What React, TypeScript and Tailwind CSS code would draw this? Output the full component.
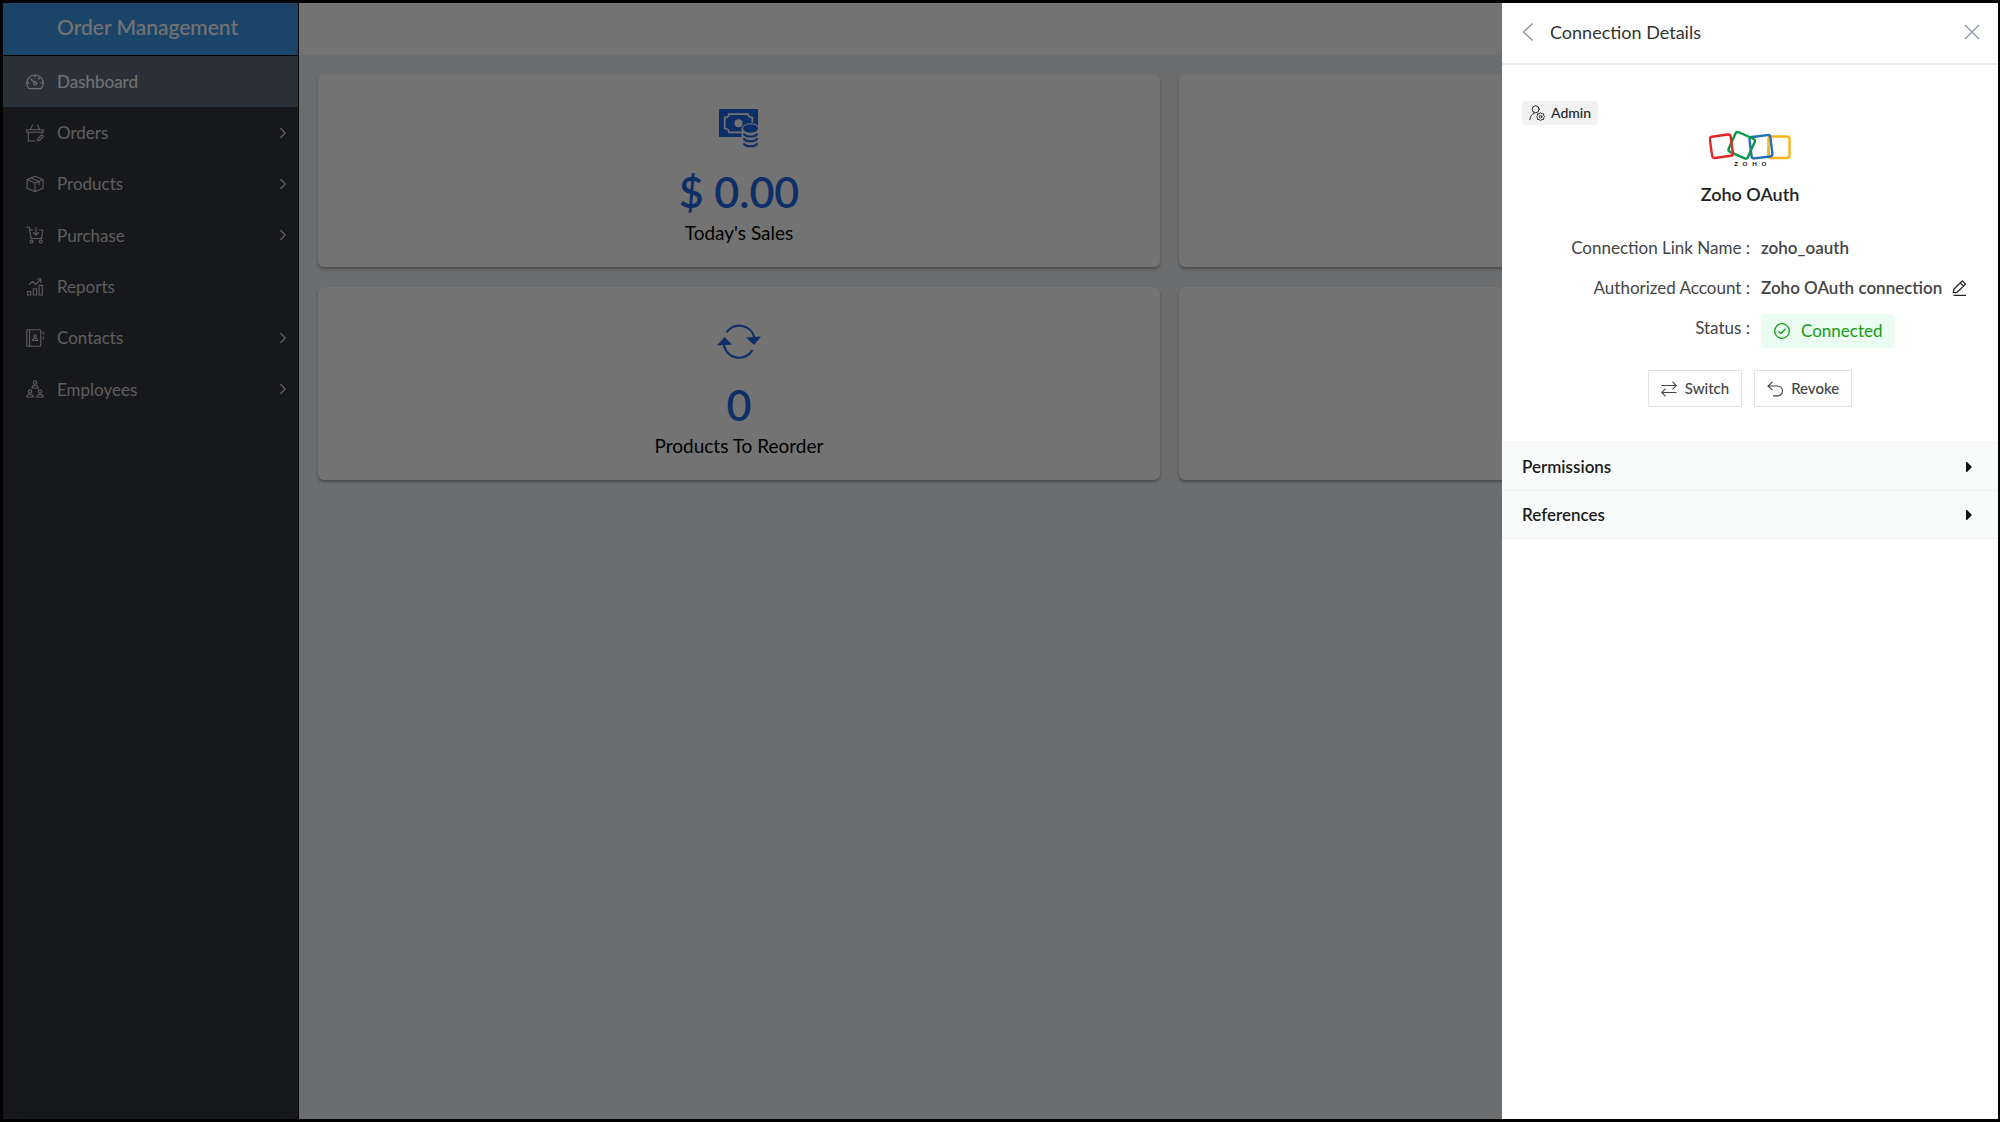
import { useState } from "react";
import type { ReactNode } from "react";

type IconProps = { className?: string };

function LineIcon({ className = "size-[18px]", children }: IconProps & { children: ReactNode }) {
  return (
    <svg
      viewBox="0 0 18 18"
      className={className}
      fill="none"
      stroke="currentColor"
      strokeWidth="1.1"
      strokeLinecap="round"
      strokeLinejoin="round"
      aria-hidden
    >
      {children}
    </svg>
  );
}

const DashboardIcon = () => (
  <LineIcon>
    <path d="M3 15.6h12c1.5-1.4 2.3-3.300 2.300-5.300A8.300 8.300 0 0 0 .7 10.300c0 2 .8 3.900 2.300 5.300z" />
    <circle cx="9.200" cy="10.400" r="1.500" />
    <path d="M8.200 9.300 4.800 6M9 2v2M13.600 5l-1 1M17 10h-2M1 10h2" />
  </LineIcon>
);

const OrdersIcon = () => (
  <LineIcon>
    <path d="M.7 5.800h16.600v2.400H.7zM4.500 5.600 6.500 1M13.500 5.600l-2-4.600M2.300 8.400V17h6.500M15.700 8.400v1.200" />
    <path d="m11.800 14.800 3.300-3.300a1.100 1.100 0 0 1 1.700 1.700l-3.300 3.300-2 .3z" />
  </LineIcon>
);

const ProductsIcon = () => (
  <LineIcon>
    <path d="M9 1.200 17 4.500v8.800l-8 3.500-8-3.500V4.500zM1 4.500 9 8l8-3.500M9 8v8.700M4.800 2.900l8.200 3.500v3.300" />
  </LineIcon>
);

const PurchaseIcon = () => (
  <LineIcon>
    <path d="M.8 1.200h2.400l1.900 11.300h10.600M3.800 4h3M13.600 4h3.200l-1.300 8.300M10 1.500v7.300M7.300 6.500 10 9l2.700-2.500" />
    <circle cx="5.600" cy="15.600" r="1.500" />
    <circle cx="14.800" cy="15.600" r="1.500" />
  </LineIcon>
);

const ReportsIcon = () => (
  <LineIcon>
    <path d="M1.500 13.500h3.300V17H1.500zM7.300 10.700h3.300V17H7.300zM13 7.400h3.300V17H13zM3.300 6.500l3.300-3 3.200 3L14.400 1.400M11.300 1h3.400v3.300" />
  </LineIcon>
);

const ContactsIcon = () => (
  <LineIcon>
    <path d="M2 .8h11.500a1.300 1.300 0 0 1 1.300 1.300v13.800a1.300 1.300 0 0 1-1.300 1.300H.8V.8zM3.600.8v16.400M17.300 3v2.200M17.300 8v2.200" />
    <circle cx="9.200" cy="7" r="1.300" />
    <path d="M6.500 11.500c.3-1.700 1.300-2.300 2.700-2.300s2.400.6 2.700 2.300z" />
  </LineIcon>
);

const EmployeesIcon = () => (
  <LineIcon>
    <circle cx="9" cy="2.500" r="1.700" />
    <path d="M5.800 8c.3-1.900 1.400-2.800 3.200-2.800s2.900.9 3.200 2.800z" />
    <circle cx="4" cy="11.600" r="1.700" />
    <path d="M.8 17c.3-1.900 1.400-2.800 3.200-2.800S6.900 15.100 7.200 17z" />
    <circle cx="14" cy="11.600" r="1.700" />
    <path d="M10.800 17c.3-1.900 1.400-2.800 3.200-2.800s2.900.9 3.200 2.800z" />
  </LineIcon>
);

const MoneyIcon = () => (
  <svg viewBox="0 0 40 40" className="size-10" fill="currentColor" aria-hidden>
    <path d="M0 1h39v16.500c-2-1.500-4.500-2.300-7.300-2.300-5 0-9.200 2.600-9.200 6.300V29H0z" />
    <path
      d="M22.500 24.300H10c0-2-1.700-3.800-4.300-3.800v-11C8.300 9.500 10 8 10 6.200h19c0 1.800 1.800 3.300 4.300 3.300v5"
      fill="none"
      stroke="#fff"
      strokeWidth="1.700"
    />
    <circle cx="19.500" cy="15.200" r="4" fill="#fff" />
    <ellipse cx="31.500" cy="20.500" rx="7.500" ry="4.200" />
    <g fill="none" stroke="currentColor" strokeWidth="2.200">
      <path d="M24.500 25.500c2 4 12 4 14 0M24.500 30.300c2 4 12 4 14 0M24.500 35.200c2 4 12 4 14 0" />
    </g>
  </svg>
);

const ReorderIcon = () => (
  <svg viewBox="0 0 44 36" className="h-9 w-11" fill="none" stroke="currentColor" strokeWidth="2.200" aria-hidden>
    <path d="M9.500 9.500A15.500 15.500 0 0 1 37.500 15M35.500 27A15.500 15.500 0 0 1 6.700 21" />
    <path d="M29 14.500 44 13.500 37 22zM0 22.500 7.500 14 15 21.500z" fill="currentColor" stroke="none" />
  </svg>
);

const ZohoLogo = () => (
  <svg viewBox="0 0 82 36" className="h-9 w-[82px]" fill="none" strokeWidth="2.400" role="img" aria-label="Zoho">
    <rect x="59.500" y="5.500" width="21" height="21.500" rx="2.500" stroke="#f9b21d" />
    <rect x="41.500" y="5" width="21" height="21.500" rx="2.500" stroke="#226db4" transform="rotate(-7 52 16)" />
    <rect x="22" y="3.500" width="21" height="21.500" rx="2.500" stroke="#089949" transform="rotate(24 32.500 14.800)" />
    <rect x="2" y="4.500" width="21" height="21.500" rx="2.500" stroke="#e42527" transform="rotate(-8 12.500 16)" />
    <path d="M59.500 15v9" stroke="#f9b21d" />
    <g
      fill="#111"
      stroke="none"
      fontFamily="Lato, sans-serif"
      fontSize="6"
      fontWeight="900"
      textAnchor="middle"
    >
      <text x="27" y="35">Z</text>
      <text x="36" y="35">O</text>
      <text x="45.500" y="35">H</text>
      <text x="55" y="35">O</text>
    </g>
  </svg>
);

const navItems = [
  { label: "Dashboard", icon: DashboardIcon, active: true },
  { label: "Orders", icon: OrdersIcon, sub: true },
  { label: "Products", icon: ProductsIcon, sub: true },
  { label: "Purchase", icon: PurchaseIcon, sub: true },
  { label: "Reports", icon: ReportsIcon },
  { label: "Contacts", icon: ContactsIcon, sub: true },
  { label: "Employees", icon: EmployeesIcon, sub: true },
];

function Sidebar() {
  return (
    <aside className="flex w-[296px] shrink-0 flex-col border-r border-black bg-[#34353c]">
      <div className="flex h-[53px] items-center border-b border-black bg-[#3d97e8] pb-1 pl-[54px] text-[21px] font-medium text-white">
        Order Management
      </div>
      <nav className="flex h-[359px] flex-col">
        {navItems.map(({ label, icon: Icon, active, sub }) => (
          <a
            key={label}
            href="#"
            className={`flex flex-1 items-center gap-[13px] pr-[10px] pl-[23px] text-[17px] ${
              active ? "bg-[#5e6c7c] text-white" : "text-[#d0d0d2]"
            }`}
          >
            <Icon />
            <span className="flex-1">{label}</span>
            {sub && (
              <LineIcon className="size-[10px]">
                <path d="m5 1 8 8-8 8" strokeWidth="2.600" />
              </LineIcon>
            )}
          </a>
        ))}
      </nav>
    </aside>
  );
}

function StatCard({ icon, value, label }: { icon?: ReactNode; value?: string; label?: string }) {
  return (
    <section className="flex h-[193px] flex-col items-center rounded-md bg-white pt-8 shadow-[0_2px_3px_rgba(0,0,0,0.3)]">
      <div className="flex h-11 items-center text-[#1f66e4]">{icon}</div>
      <p className="mt-4 text-[43px] leading-[52px] font-semibold text-[#1f66e4]">{value}</p>
      <p className="text-[19px] leading-[30px] text-black">{label}</p>
    </section>
  );
}

function Row({ label, children }: { label: string; children: ReactNode }) {
  return (
    <>
      <dt className="text-right">{label} :</dt>
      <dd className="flex items-start pl-[11px] font-semibold">{children}</dd>
    </>
  );
}

function AccordionItem({ title }: { title: string }) {
  const [open, setOpen] = useState(false);
  return (
    <button
      type="button"
      aria-expanded={open}
      onClick={() => setOpen(!open)}
      className="flex h-12 w-full items-center justify-between border-b border-[#f0f1f1] bg-[#f9fbfa] pr-[26px] pl-5 text-[17px] font-semibold text-[#1b1b1b]"
    >
      {title}
      <svg viewBox="0 0 6 10" className={`h-[10px] w-[6px] ${open ? "rotate-90" : ""}`} aria-hidden>
        <path d="M0 0h1l5 5-5 5H0z" fill="#111" />
      </svg>
    </button>
  );
}

function ConnectionPanel() {
  return (
    <div role="dialog" aria-label="Connection Details" className="flex w-[496px] flex-col bg-white text-[#444]">
      <header className="flex h-[62px] items-center border-b-2 border-[#ececec] pr-[18px] pb-[2px] pl-5">
        <button type="button" aria-label="Back" className="text-[#8c8f98]">
          <svg viewBox="0 0 12 18" className="h-[18px] w-3" fill="none" stroke="currentColor" strokeWidth="1.300" aria-hidden>
            <path d="M10.500.5 1.500 9l9 8.500" />
          </svg>
        </button>
        <h2 className="ml-4 flex-1 text-lg text-[#333]">Connection Details</h2>
        <button type="button" aria-label="Close" className="text-[#8d96ae]">
          <svg viewBox="0 0 16 16" className="size-4" fill="none" stroke="currentColor" strokeWidth="1.300" aria-hidden>
            <path d="m1 1 14 14M15 1 1 15" />
          </svg>
        </button>
      </header>

      <div className="flex flex-col px-5 pt-9">
        <span className="flex h-6 items-center gap-[6px] self-start rounded-sm bg-[#f2f2f3] px-[7px] text-sm font-medium text-[#222]">
          <LineIcon className="size-4">
            <circle cx="7.500" cy="4.800" r="3.900" />
            <path d="M1 16.500c.3-4 2-6.200 5-7.200" />
            <path d="m13 8.800 1.500 1 1.900.2.100 1.800 1 1.300-1 1.300-.1 1.800-1.900.2-1.500 1-1.500-1-1.900-.2-.1-1.800-1-1.300 1-1.300.1-1.800 1.900-.2z" />
            <circle cx="13" cy="13.200" r="1.500" />
          </LineIcon>
          Admin
        </span>
        <div className="mt-[6px] flex flex-col items-center">
          <ZohoLogo />
          <h3 className="mt-[13px] text-lg leading-7 font-semibold text-[#222]">Zoho OAuth</h3>
        </div>
      </div>

      <dl className="mt-7 grid grid-cols-2 gap-y-4 text-[17px] leading-6">
        <Row label="Connection Link Name">zoho_oauth</Row>
        <Row label="Authorized Account">
          Zoho OAuth connection
          <button type="button" aria-label="Edit account" className="mt-1 ml-[10px] text-[#222]">
            <svg viewBox="0 0 16 16" className="size-4" fill="none" stroke="currentColor" strokeWidth="1.300" strokeLinejoin="round" aria-hidden>
              <path d="M1.500 15.300H14M1.300 12.700l.6-3.500L10.300.9l3.200 3.200-8.400 8.200zM8.300 2.900l3.200 3.200" />
            </svg>
          </button>
        </Row>
        <Row label="Status">
          <span className="mt-[-2px] flex h-[34px] items-center gap-[11px] rounded-sm bg-[#ebfdf3] px-[13px] font-normal text-[#149c14]">
            <svg viewBox="0 0 16 16" className="size-4" fill="none" stroke="currentColor" strokeWidth="1.300" aria-hidden>
              <circle cx="8" cy="8" r="7.300" />
              <path d="m4.500 8.200 2.500 2.300 4.500-4.700" />
            </svg>
            Connected
          </span>
        </Row>
      </dl>

      <div className="mt-[22px] mb-[35px] flex justify-center gap-3">
        <button type="button" className="flex h-[37px] items-center gap-2 border border-[#e2e2e2] px-3 text-[15px] font-medium">
          <svg viewBox="0 0 16 16" className="size-4" fill="none" stroke="currentColor" strokeWidth="1.100" aria-hidden>
            <path d="M.5 4.500h15M11.500.7l3.800 3.800-3.800 3.800M15.500 11.500H.5M4.500 7.700.7 11.500l3.800 3.800" />
          </svg>
          Switch
        </button>
        <button type="button" className="flex h-[37px] items-center gap-2 border border-[#e2e2e2] px-3 text-[15px] font-medium">
          <svg viewBox="0 0 16 16" className="size-4" fill="none" stroke="currentColor" strokeWidth="1.100" aria-hidden>
            <path d="M5.500.8 1 5l4.500 4.200M1 5h9.500c2.800 0 5 2 5 4.900s-2.200 5-5 5H6" />
          </svg>
          Revoke
        </button>
      </div>

      <div className="border-t border-[#f0f1f1]">
        <AccordionItem title="Permissions" />
        <AccordionItem title="References" />
      </div>
    </div>
  );
}

export default function App() {
  return (
    <div className="relative flex min-h-screen overflow-hidden border-[3px] border-r-2 border-black font-[Lato,sans-serif]">
      <Sidebar />
      <main className="min-w-0 flex-1 bg-[#eef1f5]">
        <div className="h-[52px] bg-white" />
        <div className="-mr-1 grid grid-cols-[50%_50%] gap-x-[19px] gap-y-5 pt-[19px] pl-[19px]">
          <StatCard icon={<MoneyIcon />} value="$ 0.00" label="Today's Sales" />
          <StatCard />
          <StatCard icon={<ReorderIcon />} value="0" label="Products To Reorder" />
          <StatCard />
        </div>
      </main>

      {/* Drawer over the dimmed page */}
      <div className="absolute inset-0 flex justify-end bg-black/55">
        <ConnectionPanel />
      </div>
    </div>
  );
}
